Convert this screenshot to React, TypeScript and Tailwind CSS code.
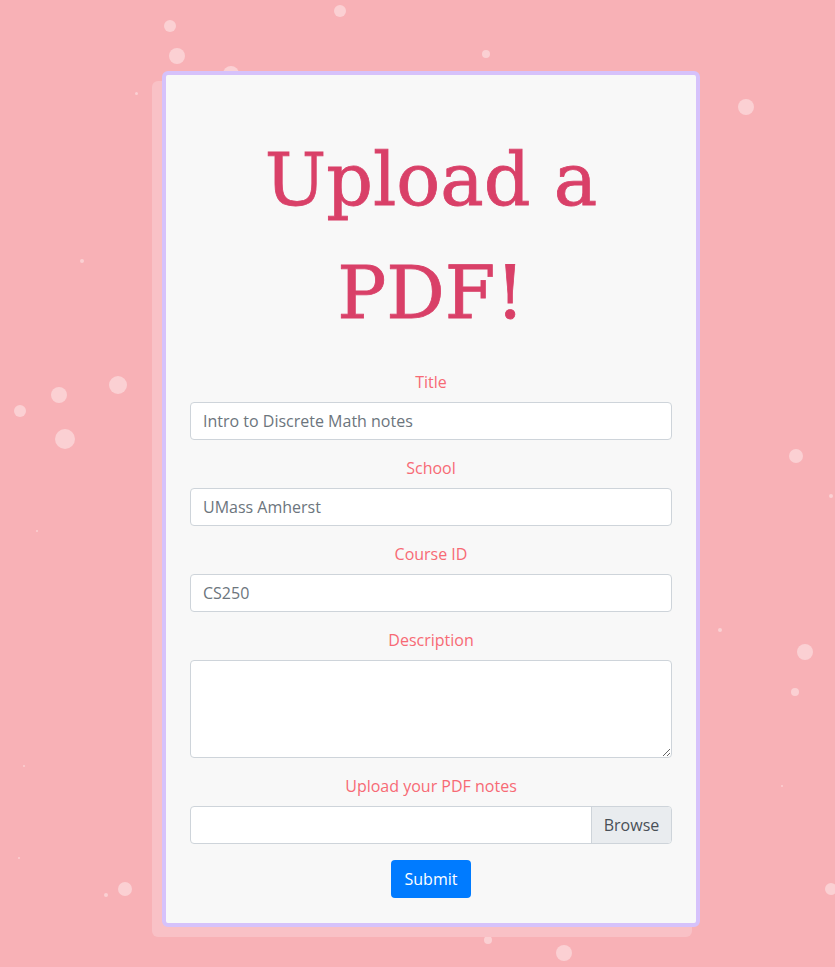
import React from 'react';

const bubbles = [
  { x: 170, y: 26, r: 6 },
  { x: 340, y: 11, r: 6 },
  { x: 177, y: 56, r: 8 },
  { x: 486, y: 54, r: 4 },
  { x: 231, y: 74, r: 8 },
  { x: 136, y: 93, r: 1.5 },
  { x: 746, y: 107, r: 8 },
  { x: 82, y: 261, r: 2 },
  { x: 118, y: 385, r: 9 },
  { x: 59, y: 395, r: 8 },
  { x: 20, y: 411, r: 6 },
  { x: 65, y: 439, r: 10 },
  { x: 796, y: 456, r: 7 },
  { x: 831, y: 496, r: 2 },
  { x: 37, y: 531, r: 1 },
  { x: 720, y: 630, r: 2 },
  { x: 805, y: 652, r: 8 },
  { x: 795, y: 692, r: 4 },
  { x: 24, y: 766, r: 1 },
  { x: 782, y: 786, r: 1 },
  { x: 19, y: 858, r: 1 },
  { x: 125, y: 889, r: 7 },
  { x: 106, y: 895, r: 2 },
  { x: 831, y: 889, r: 6 },
  { x: 488, y: 940, r: 4 },
  { x: 564, y: 953, r: 8 },
];

const fields = [
  { label: 'Title', value: 'Intro to Discrete Math notes' },
  { label: 'School', value: 'UMass Amherst' },
  { label: 'Course ID', value: 'CS250' },
];

export default function App() {
  return (
    <div
      className="relative min-h-[967px] overflow-hidden bg-[#f8b1b6] pt-[71px]"
      style={{ fontFamily: '"Open Sans", "Noto Sans", sans-serif' }}
    >
      {bubbles.map((b, i) => (
        <span
          key={i}
          className="absolute rounded-full bg-white/40"
          style={{ left: b.x - b.r, top: b.y - b.r, width: b.r * 2, height: b.r * 2 }}
        />
      ))}

      <div className="relative ml-[162px] w-[538px]">
        <div className="absolute left-[-10px] top-[10px] h-full w-[540px] rounded-md bg-[#f9c1c6]" />

        <div className="relative rounded-md border-4 border-[#d6c2fb] bg-[#f8f8f8] px-[24px] pb-[25px] pt-[48px]">
          <h1
            className="text-center text-[73px] leading-[113px] text-[#d94068] [-webkit-text-stroke:0.8px_#d94068]"
            style={{ fontFamily: '"DejaVu Serif", serif' }}
          >
            Upload a
            <br />
            PDF!
          </h1>

          <form className="mt-[21px] flex flex-col">
            {fields.map((f) => (
              <div key={f.label} className="mb-4">
                <label className="mb-2 block text-center text-base leading-6 text-[#f76a75]">{f.label}</label>
                <input
                  readOnly
                  value={f.value}
                  className="block h-[38px] w-full rounded border border-[#ced4da] bg-white px-3 text-base text-[#6c757d] outline-none"
                />
              </div>
            ))}

            <div className="mb-4">
              <label className="mb-2 block text-center text-base leading-6 text-[#f76a75]">Description</label>
              <textarea className="block h-[98px] w-full resize-y rounded border border-[#ced4da] bg-white px-3 py-1.5 text-base outline-none" />
            </div>

            <div className="mb-4">
              <label className="mb-2 block text-center text-base leading-6 text-[#f76a75]">Upload your PDF notes</label>
              <div className="flex h-[38px] w-full overflow-hidden rounded border border-[#ced4da] bg-white">
                <div className="flex-1" />
                <div className="flex w-[80px] items-center justify-center border-l border-[#ced4da] bg-[#e9ecef] text-base text-[#495057]">
                  Browse
                </div>
              </div>
            </div>

            <div className="flex justify-center">
              <button
                type="button"
                className="h-[38px] w-[80px] rounded bg-[#007bff] text-base text-white"
              >
                Submit
              </button>
            </div>
          </form>
        </div>
      </div>
    </div>
  );
}
